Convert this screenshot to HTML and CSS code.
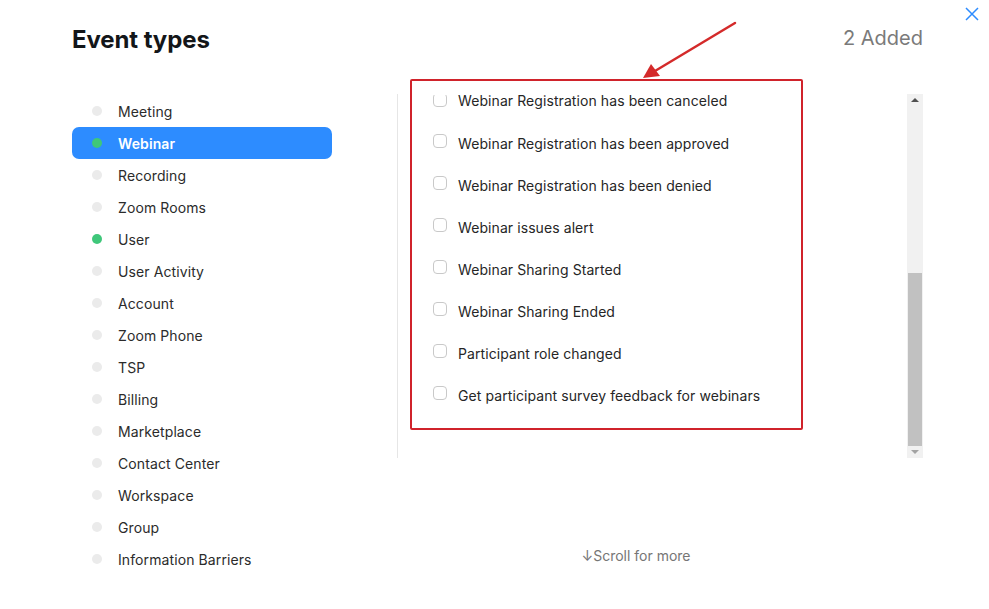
FILE: index.html
```html
<!DOCTYPE html>
<html lang="en">
<head>
<meta charset="utf-8">
<title>Event types</title>
<link rel="stylesheet" href="styles.css">
</head>
<body>
<div class="modal">
  <button class="close" aria-label="Close">
    <svg width="14" height="14" viewBox="0 0 14 14"><path d="M1 1 L13 13 M13 1 L1 13" stroke="#2d8cff" stroke-width="1.5" fill="none"/></svg>
  </button>
  <header class="head">
    <h1 class="title">Event types</h1>
    <span class="added">2 Added</span>
  </header>
  <div class="body">
    <ul class="nav">
      <li class="nav-item"><span class="dot"></span>Meeting</li>
      <li class="nav-item active"><span class="dot on"></span>Webinar</li>
      <li class="nav-item"><span class="dot"></span>Recording</li>
      <li class="nav-item"><span class="dot"></span>Zoom Rooms</li>
      <li class="nav-item"><span class="dot on"></span>User</li>
      <li class="nav-item"><span class="dot"></span>User Activity</li>
      <li class="nav-item"><span class="dot"></span>Account</li>
      <li class="nav-item"><span class="dot"></span>Zoom Phone</li>
      <li class="nav-item"><span class="dot"></span>TSP</li>
      <li class="nav-item"><span class="dot"></span>Billing</li>
      <li class="nav-item"><span class="dot"></span>Marketplace</li>
      <li class="nav-item"><span class="dot"></span>Contact Center</li>
      <li class="nav-item"><span class="dot"></span>Workspace</li>
      <li class="nav-item"><span class="dot"></span>Group</li>
      <li class="nav-item"><span class="dot"></span>Information Barriers</li>
    </ul>
    <div class="right">
      <div class="panel">
        <div class="viewport">
          <ul class="events">
            <li class="event partial"><span class="box"></span>Webinar Registration has been canceled</li>
            <li class="event"><span class="box"></span>Webinar Registration has been approved</li>
            <li class="event"><span class="box"></span>Webinar Registration has been denied</li>
            <li class="event"><span class="box"></span>Webinar issues alert</li>
            <li class="event"><span class="box"></span>Webinar Sharing Started</li>
            <li class="event"><span class="box"></span>Webinar Sharing Ended</li>
            <li class="event"><span class="box"></span>Participant role changed</li>
            <li class="event"><span class="box"></span>Get participant survey feedback for webinars</li>
          </ul>
        </div>
        <div class="scrollbar">
          <span class="arrow up"></span>
          <span class="track"><span class="thumb"></span></span>
          <span class="arrow down"></span>
        </div>
      </div>
      <p class="more">↓Scroll for more</p>
    </div>
  </div>
  <div class="highlight"></div>
  <svg class="pointer" width="989" height="100" viewBox="0 0 989 100">
    <line x1="735" y1="23" x2="655" y2="71" stroke="#d42a2a" stroke-width="2.5" stroke-linecap="round"/>
    <polygon points="643,78 651,64 660,76" fill="#d42a2a"/>
  </svg>
</div>
</body>
</html>
```

FILE: styles.css
```css
* { box-sizing: border-box; }
html, body { margin: 0; padding: 0; background: #fff; }
body {
  font-family: Inter, "Noto Sans", "Liberation Sans", sans-serif;
  color: #222;
  width: 989px;
  height: 609px;
  overflow: hidden;
}
.modal {
  position: relative;
  width: 989px;
  height: 609px;
  padding: 25px 66px 0 72px;
}
.close {
  position: absolute;
  top: 7px;
  right: 10px;
  width: 14px;
  height: 14px;
  padding: 0;
  border: 0;
  background: none;
  display: flex;
}
.head {
  display: flex;
  justify-content: space-between;
  align-items: flex-start;
  height: 70px;
}
.title {
  margin: 0;
  font-size: 24px;
  line-height: 30px;
  font-weight: 700;
  color: #131619;
  letter-spacing: -0.1px;
}
.added {
  font-size: 20px;
  line-height: 26px;
  color: #7a7a7a;
  margin-top: 0;
}
.body {
  display: flex;
}
.nav {
  list-style: none;
  margin: 0;
  padding: 0;
  width: 261px;
  margin-right: 65px;
}
.nav-item {
  display: flex;
  align-items: center;
  height: 32px;
  padding-left: 20px;
  gap: 16px;
  font-size: 14px;
  letter-spacing: 0.1px;
  color: #2b2b2b;
  border-radius: 7px;
}
.nav-item.active {
  background: #2d8cff;
  color: #fff;
  font-weight: 600;
}
.dot {
  width: 10px;
  height: 10px;
  border-radius: 50%;
  background: #ebebeb;
  flex: none;
}
.dot.on { background: #3fc77a; }
.right {
  display: flex;
  flex-direction: column;
}
.panel {
  display: flex;
  border-left: 1px solid #e6e6e6;
  height: 364px;
  margin-top: -1px;
}
.viewport {
  width: 509px;
  height: 364px;
  padding-left: 35px;
}
.events {
  list-style: none;
  margin: 0;
  padding: 0;
}
.event {
  display: flex;
  align-items: center;
  height: 42px;
  gap: 11px;
  font-size: 14px;
  letter-spacing: 0.08px;
  color: #262626;
}
.box {
  width: 14px;
  height: 14px;
  border: 1px solid #c9c9c9;
  border-radius: 4px;
  background: #fff;
  flex: none;
  margin-top: -4px;
}
.event.partial {
  height: 28px;
  align-items: flex-start;
  line-height: 14px;
}
.event.partial .box {
  margin-top: -1px;
  clip-path: inset(2px 0 0 0);
}
.scrollbar {
  width: 16px;
  height: 364px;
  background: #f1f1f1;
  display: flex;
  flex-direction: column;
  align-items: center;
}
.arrow {
  height: 12px;
  width: 16px;
  display: flex;
  align-items: center;
  justify-content: center;
}
.arrow.up::before {
  content: "";
  border-left: 4px solid transparent;
  border-right: 4px solid transparent;
  border-bottom: 4px solid #505050;
}
.arrow.down::before {
  content: "";
  border-left: 4px solid transparent;
  border-right: 4px solid transparent;
  border-top: 4px solid #a3a3a3;
}
.track {
  flex: 1;
  width: 100%;
  display: flex;
  flex-direction: column;
  justify-content: flex-end;
  padding: 0 1px;
}
.thumb {
  height: 173px;
  background: #c1c1c1;
}
.more {
  margin: 89px 0 0;
  width: 478px;
  text-align: center;
  font-size: 14px;
  color: #767676;
}
.highlight {
  position: absolute;
  left: 410px;
  top: 79px;
  width: 393px;
  height: 351px;
  border: 2px solid #d0232b;
  border-radius: 2px;
  pointer-events: none;
}
.pointer {
  position: absolute;
  left: 0;
  top: 0;
  pointer-events: none;
}
```
